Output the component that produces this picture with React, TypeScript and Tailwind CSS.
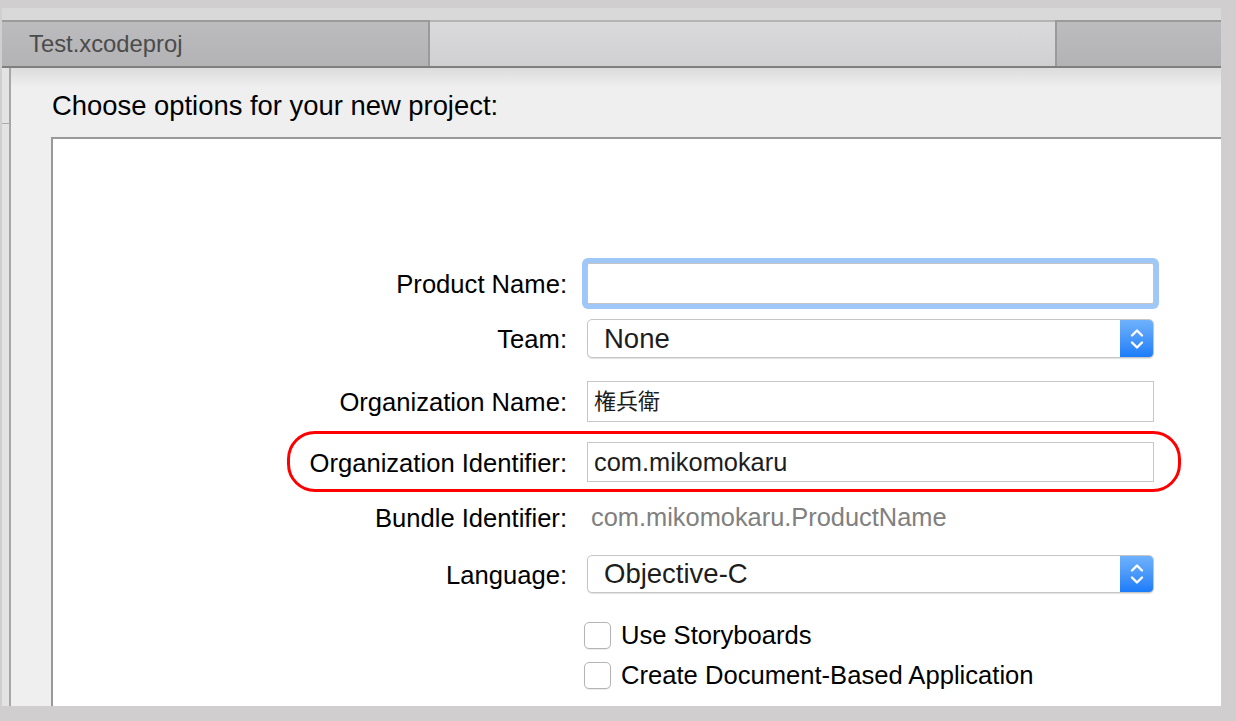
import type { ReactNode } from 'react'

/**
 * Xcode "new project" options sheet
 */
const sans = "font-['Liberation_Sans','Noto_Sans_CJK_JP',Arial,sans-serif]"

function Chevrons() {
  return (
    <svg width="14" height="24" viewBox="0 0 14 24" fill="none">
      <path d="M2 8.5 L7 3.5 L12 8.5" stroke="white" strokeWidth="2.4" strokeLinecap="round" strokeLinejoin="round" />
      <path d="M2 15.5 L7 20.5 L12 15.5" stroke="white" strokeWidth="2.4" strokeLinecap="round" strokeLinejoin="round" />
    </svg>
  )
}

function Row({ label, children, className = '' }: { label: string; children: ReactNode; className?: string }) {
  return (
    <div className={`relative flex items-center ${className}`}>
      <div className="w-[514px] pt-[2px] text-right text-[25.6px] text-black">{label}</div>
      <div className="ml-[20px] h-full w-[567px]">{children}</div>
    </div>
  )
}

function Popup({ value }: { value: string }) {
  return (
    <div className="flex h-full overflow-hidden rounded-[5px] border border-[#c6c6c6] bg-white shadow-[0_1px_1px_rgba(0,0,0,0.12)]">
      <div className="flex flex-1 items-center pl-[16px] text-[27.5px] text-[#1d1d1d]">{value}</div>
      <div className="flex w-[33px] items-center justify-center bg-gradient-to-b from-[#6fb2fb] to-[#1a7cf9]">
        <Chevrons />
      </div>
    </div>
  )
}

function TextField({ children }: { children?: ReactNode }) {
  return (
    <div className="flex h-full items-center border border-[#c7c7c7] bg-white pl-[6px] text-[25.4px] text-[#1d1d1d]">
      {children}
    </div>
  )
}

function Checkbox({ label, className = '' }: { label: string; className?: string }) {
  return (
    <div className={`flex h-[27px] items-center pl-[531px] ${className}`}>
      <div className="h-[27px] w-[27px] rounded-[5px] border border-[#b4b4b4] bg-white shadow-[0_1px_1px_rgba(0,0,0,0.08)]"></div>
      <span className="ml-[10px] text-[25.6px] text-black">{label}</span>
    </div>
  )
}

export default function App() {
  return (
    <div className={`flex h-[721px] w-[1236px] flex-col bg-[#d0cecf] pb-[15px] pl-[2px] pr-[15px] pt-[8px] ${sans}`}>
      <div className="flex flex-1 flex-col bg-[#efefef]">
        {/* title strip */}
        <div className="h-[12px] bg-[#dad9da]"></div>

        {/* tab bar */}
        <div className="flex h-[48px] border-b-2 border-[#7f7f7f]">
          <div className="flex w-[426px] items-center border-t-2 border-[#9b9b9b] bg-gradient-to-b from-[#bcbbbd] to-[#b3b2b4] pl-[27px] text-[23.8px] text-[#4b4b4b]">
            Test.xcodeproj
          </div>
          <div className="w-[2px] bg-[#9a9a9a]"></div>
          <div className="flex-1 border-t-2 border-[#b4b4b4] bg-gradient-to-b from-[#dad9db] to-[#d0cfd1]"></div>
          <div className="w-[2px] bg-[#9a9a9a]"></div>
          <div className="w-[164px] border-t-2 border-[#9b9b9b] bg-gradient-to-b from-[#bcbbbd] to-[#b3b2b4]"></div>
        </div>

        {/* body */}
        <div className="flex flex-1">
          <div className="flex w-[9px] flex-col border-r-2 border-[#a6a6a6] bg-[#e3e3e3]">
            <div className="h-[56px] border-b border-[#a9a9a9]"></div>
          </div>

          <div className="flex flex-1 flex-col bg-gradient-to-b from-[#dcdcdc] via-[#efefef] via-[3%] to-[#efefef]">
            <div className="ml-[41px] mt-[22px] h-[32px] text-[27.4px] leading-[32px] text-black">
              Choose options for your new project:
            </div>

            <div className="ml-[40px] mt-[15px] flex flex-1 flex-col border-l-2 border-t-2 border-[#999] bg-white">
              <Row label="Product Name:" className="mt-[124px] h-[41px]">
                <div className="h-full rounded-[2px] border border-[#c4c4c4] bg-white shadow-[0_0_0_5px_#9fc8f8]"></div>
              </Row>

              <Row label="Team:" className="mt-[15px] h-[39px]">
                <Popup value="None" />
              </Row>

              <Row label="Organization Name:" className="mt-[23px] h-[41px]">
                <TextField>
                  <span className="text-[22px]">権兵衛</span>
                </TextField>
              </Row>

              <Row label="Organization Identifier:" className="mt-[20px] h-[40px]">
                <TextField>com.mikomokaru</TextField>
                <div className="pointer-events-none absolute -bottom-[10px] -top-[11px] left-[234px] w-[894px] rounded-[28px] border-[3.5px] border-[#ff0000]"></div>
              </Row>

              <Row label="Bundle Identifier:" className="mt-[15px] h-[40px]">
                <div className="flex h-full items-center pl-[4px] text-[25.4px] text-[#808080]">
                  com.mikomokaru.ProductName
                </div>
              </Row>

              <Row label="Language:" className="mt-[18px] h-[38px]">
                <Popup value="Objective-C" />
              </Row>

              <Checkbox label="Use Storyboards" className="mt-[29px]" />
              <Checkbox label="Create Document-Based Application" className="mt-[13px]" />
            </div>
          </div>
        </div>
      </div>
    </div>
  )
}
